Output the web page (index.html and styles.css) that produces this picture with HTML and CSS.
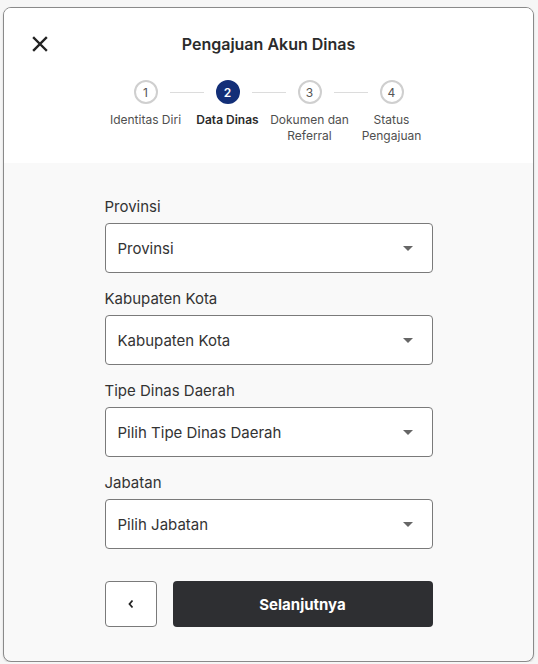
FILE: index.html
```html
<!DOCTYPE html>
<html lang="id">
<head>
<meta charset="utf-8">
<title>Pengajuan Akun Dinas</title>
<link rel="stylesheet" href="styles.css">
</head>
<body>
<div class="card">
  <header class="header">
    <div class="title-row">
      <button class="close" aria-label="Tutup">
        <svg width="16" height="16" viewBox="0 0 16 16"><path d="M2 2 L14 14 M14 2 L2 14" stroke="#222" stroke-width="2.4" stroke-linecap="square" fill="none"/></svg>
      </button>
      <h1 class="title">Pengajuan Akun Dinas</h1>
    </div>
    <ol class="stepper">
      <li class="step"><span class="circle">1</span><span class="step-label">Identitas Diri</span></li>
      <li class="step active"><span class="circle">2</span><span class="step-label">Data Dinas</span></li>
      <li class="step"><span class="circle">3</span><span class="step-label">Dokumen dan Referral</span></li>
      <li class="step"><span class="circle">4</span><span class="step-label">Status Pengajuan</span></li>
    </ol>
  </header>
  <main class="body">
    <form class="form">
      <div class="field">
        <label class="label">Provinsi</label>
        <div class="select"><span>Provinsi</span><span class="caret"></span></div>
      </div>
      <div class="field">
        <label class="label">Kabupaten Kota</label>
        <div class="select"><span>Kabupaten Kota</span><span class="caret"></span></div>
      </div>
      <div class="field">
        <label class="label">Tipe Dinas Daerah</label>
        <div class="select"><span>Pilih Tipe Dinas Daerah</span><span class="caret"></span></div>
      </div>
      <div class="field">
        <label class="label">Jabatan</label>
        <div class="select"><span>Pilih Jabatan</span><span class="caret"></span></div>
      </div>
      <div class="actions">
        <button type="button" class="back" aria-label="Kembali">
          <svg width="8" height="10" viewBox="0 0 8 10"><path d="M5.5 1.5 L2.5 5 L5.5 8.5" stroke="#222" stroke-width="1.8" fill="none"/></svg>
        </button>
        <button type="button" class="next">Selanjutnya</button>
      </div>
    </form>
  </main>
</div>
</body>
</html>
```
FILE: styles.css
```css
* { box-sizing: border-box; }
html, body { margin: 0; padding: 0; }
body {
  background: #f6f6f6;
  font-family: Inter, "Noto Sans", Arial, sans-serif;
  color: #333;
}
.card {
  margin: 7px 0 0 3px;
  width: 531px;
  height: 655px;
  border: 1px solid #8a8a8a;
  border-radius: 8px;
  background: #f9f9f9;
  overflow: hidden;
  display: flex;
  flex-direction: column;
  box-shadow: 0 1px 2px rgba(0,0,0,0.15);
}
.header {
  background: #fff;
  height: 155px;
  padding-top: 18px;
  flex: none;
}
.title-row {
  position: relative;
  height: 36px;
  display: flex;
  align-items: center;
  justify-content: center;
}
.close {
  position: absolute;
  left: 28px;
  top: 10px;
  width: 16px;
  height: 16px;
  padding: 0;
  border: 0;
  background: none;
  display: flex;
}
.title {
  margin: 0;
  font-size: 16px;
  font-weight: 600;
  color: #2b2b2b;
  letter-spacing: 0;
}
.stepper {
  list-style: none;
  margin: 18px 0 0;
  padding: 0;
  display: grid;
  grid-template-columns: repeat(4, 82px);
  justify-content: center;
}
.step {
  position: relative;
  display: flex;
  flex-direction: column;
  align-items: center;
}
.step:not(:last-child)::after {
  content: "";
  position: absolute;
  top: 12px;
  left: calc(50% + 24px);
  width: 34px;
  height: 1px;
  background: #dcdcdc;
}
.circle {
  width: 24px;
  height: 24px;
  border-radius: 50%;
  border: 2px solid #cfcfcf;
  display: flex;
  align-items: center;
  justify-content: center;
  font-size: 12px;
  color: #555;
  background: #fff;
}
.step.active .circle {
  background: #132f78;
  border-color: #132f78;
  color: #fff;
  font-weight: 600;
}
.step-label {
  margin-top: 8px;
  font-size: 12px;
  line-height: 16px;
  color: #4f4f4f;
  text-align: center;
  width: 90px;
}
.step.active .step-label {
  font-weight: 600;
  color: #2b2b2b;
}
.body {
  flex: 1;
  padding-top: 34px;
}
.form {
  width: 328px;
  margin: 0 auto;
  display: flex;
  flex-direction: column;
  gap: 16px;
}
.field {
  display: flex;
  flex-direction: column;
  gap: 6px;
}
.label {
  font-size: 15px;
  line-height: 20px;
  color: #333;
}
.select {
  height: 50px;
  border: 1px solid #7a7a7a;
  border-radius: 4px;
  background: #fff;
  display: flex;
  align-items: center;
  justify-content: space-between;
  padding: 0 19px 0 12px;
  font-size: 15px;
  color: #333;
}
.caret {
  width: 0;
  height: 0;
  border-left: 5px solid transparent;
  border-right: 5px solid transparent;
  border-top: 5px solid #666;
}
.actions {
  margin-top: 16px;
  display: flex;
  gap: 16px;
}
.back {
  width: 52px;
  height: 46px;
  border: 1px solid #7a7a7a;
  border-radius: 4px;
  background: #fff;
  display: flex;
  align-items: center;
  justify-content: center;
  padding: 0;
}
.next {
  flex: 1;
  height: 46px;
  border: 0;
  border-radius: 4px;
  background: #2e2f32;
  color: #fff;
  font-family: inherit;
  font-size: 15px;
  font-weight: 700;
}
```
